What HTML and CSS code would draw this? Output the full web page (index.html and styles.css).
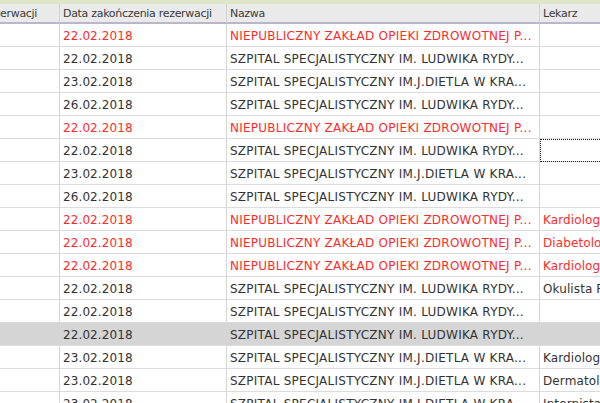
FILE: index.html
```html
<!DOCTYPE html>
<html lang="pl">
<head>
<meta charset="utf-8">
<link rel="stylesheet" href="styles.css">
</head>
<body>
<div class="window">
  <div class="topband"></div>
  <div class="viewport">
    <table class="grid">
      <colgroup>
        <col class="c-start">
        <col class="c-end">
        <col class="c-name">
        <col class="c-doc">
      </colgroup>
      <thead>
        <tr>
          <th>Data rozpoczęcia rezerwacji</th>
          <th>Data zakończenia rezerwacji</th>
          <th>Nazwa</th>
          <th>Lekarz</th>
        </tr>
      </thead>
      <tbody>
        <tr class="red"><td></td><td>22.02.2018</td><td class="nm">NIEPUBLICZNY ZAKŁAD OPIEKI ZDROWOTNEJ P...</td><td></td></tr>
        <tr><td></td><td>22.02.2018</td><td class="nm">SZPITAL SPECJALISTYCZNY IM. LUDWIKA RYDY...</td><td></td></tr>
        <tr><td></td><td>23.02.2018</td><td class="nm">SZPITAL SPECJALISTYCZNY IM.J.DIETLA W KRA...</td><td></td></tr>
        <tr><td></td><td>26.02.2018</td><td class="nm">SZPITAL SPECJALISTYCZNY IM. LUDWIKA RYDY...</td><td></td></tr>
        <tr class="red"><td></td><td>22.02.2018</td><td class="nm">NIEPUBLICZNY ZAKŁAD OPIEKI ZDROWOTNEJ P...</td><td></td></tr>
        <tr><td></td><td>22.02.2018</td><td class="nm">SZPITAL SPECJALISTYCZNY IM. LUDWIKA RYDY...</td><td class="focus"></td></tr>
        <tr><td></td><td>23.02.2018</td><td class="nm">SZPITAL SPECJALISTYCZNY IM.J.DIETLA W KRA...</td><td></td></tr>
        <tr><td></td><td>26.02.2018</td><td class="nm">SZPITAL SPECJALISTYCZNY IM. LUDWIKA RYDY...</td><td></td></tr>
        <tr class="red"><td></td><td>22.02.2018</td><td class="nm">NIEPUBLICZNY ZAKŁAD OPIEKI ZDROWOTNEJ P...</td><td>Kardiolog</td></tr>
        <tr class="red"><td></td><td>22.02.2018</td><td class="nm">NIEPUBLICZNY ZAKŁAD OPIEKI ZDROWOTNEJ P...</td><td>Diabetolog</td></tr>
        <tr class="red"><td></td><td>22.02.2018</td><td class="nm">NIEPUBLICZNY ZAKŁAD OPIEKI ZDROWOTNEJ P...</td><td>Kardiolog</td></tr>
        <tr><td></td><td>22.02.2018</td><td class="nm">SZPITAL SPECJALISTYCZNY IM. LUDWIKA RYDY...</td><td>Okulista Rodzinny</td></tr>
        <tr><td></td><td>22.02.2018</td><td class="nm">SZPITAL SPECJALISTYCZNY IM. LUDWIKA RYDY...</td><td></td></tr>
        <tr class="sel"><td></td><td>22.02.2018</td><td class="nm">SZPITAL SPECJALISTYCZNY IM. LUDWIKA RYDY...</td><td></td></tr>
        <tr><td></td><td>23.02.2018</td><td class="nm">SZPITAL SPECJALISTYCZNY IM.J.DIETLA W KRA...</td><td>Kardiolog</td></tr>
        <tr><td></td><td>23.02.2018</td><td class="nm">SZPITAL SPECJALISTYCZNY IM.J.DIETLA W KRA...</td><td>Dermatolog</td></tr>
        <tr><td></td><td>23.02.2018</td><td class="nm">SZPITAL SPECJALISTYCZNY IM.J.DIETLA W KRA...</td><td>Internista</td></tr>
      </tbody>
    </table>
  </div>
</div>
</body>
</html>
```

FILE: styles.css
```css
html, body {
  margin: 0;
  padding: 0;
  background: #ffffff;
}
.window {
  width: 600px;
  height: 403px;
  overflow: hidden;
  font-family: "DejaVu Sans", Tahoma, sans-serif;
}
.topband {
  height: 4px;
  background: #dfe5c8;
}
.viewport {
  overflow: hidden;
  width: 600px;
}
.grid {
  border-collapse: separate;
  border-spacing: 0;
  table-layout: fixed;
  width: 782px;
  margin-left: -112px;
}
.c-start { width: 172px; }
.c-end { width: 167px; }
.c-name { width: 313px; }
.c-doc { width: 130px; }

.grid th {
  height: 17px;
  padding: 1px 0 0 3px;
  text-align: left;
  font-weight: normal;
  font-size: 11px;
  letter-spacing: -0.3px;
  color: #3a3a3a;
  background: #eaeaea;
  border-right: 1px solid #d2d2d2;
  border-bottom: 2px solid #b9b6c9;
  white-space: nowrap;
  overflow: hidden;
  line-height: 17px;
}
.grid td {
  height: 19px;
  padding: 3px 0 0 3px;
  line-height: 19px;
  font-size: 12px;
  letter-spacing: 0.1px;
  color: #333333;
  border-right: 1px solid #d6d6d6;
  border-bottom: 1px solid #dcdcdc;
  white-space: nowrap;
  overflow: hidden;
}
.grid td.nm {
  letter-spacing: 0.25px;
}
.grid tr.red td {
  color: #ff2b2b;
}
.grid tr.sel td {
  background: #d5d5d5;
}
.grid td.focus {
  outline: 1px dotted #222222;
  outline-offset: -1px;
}
```
